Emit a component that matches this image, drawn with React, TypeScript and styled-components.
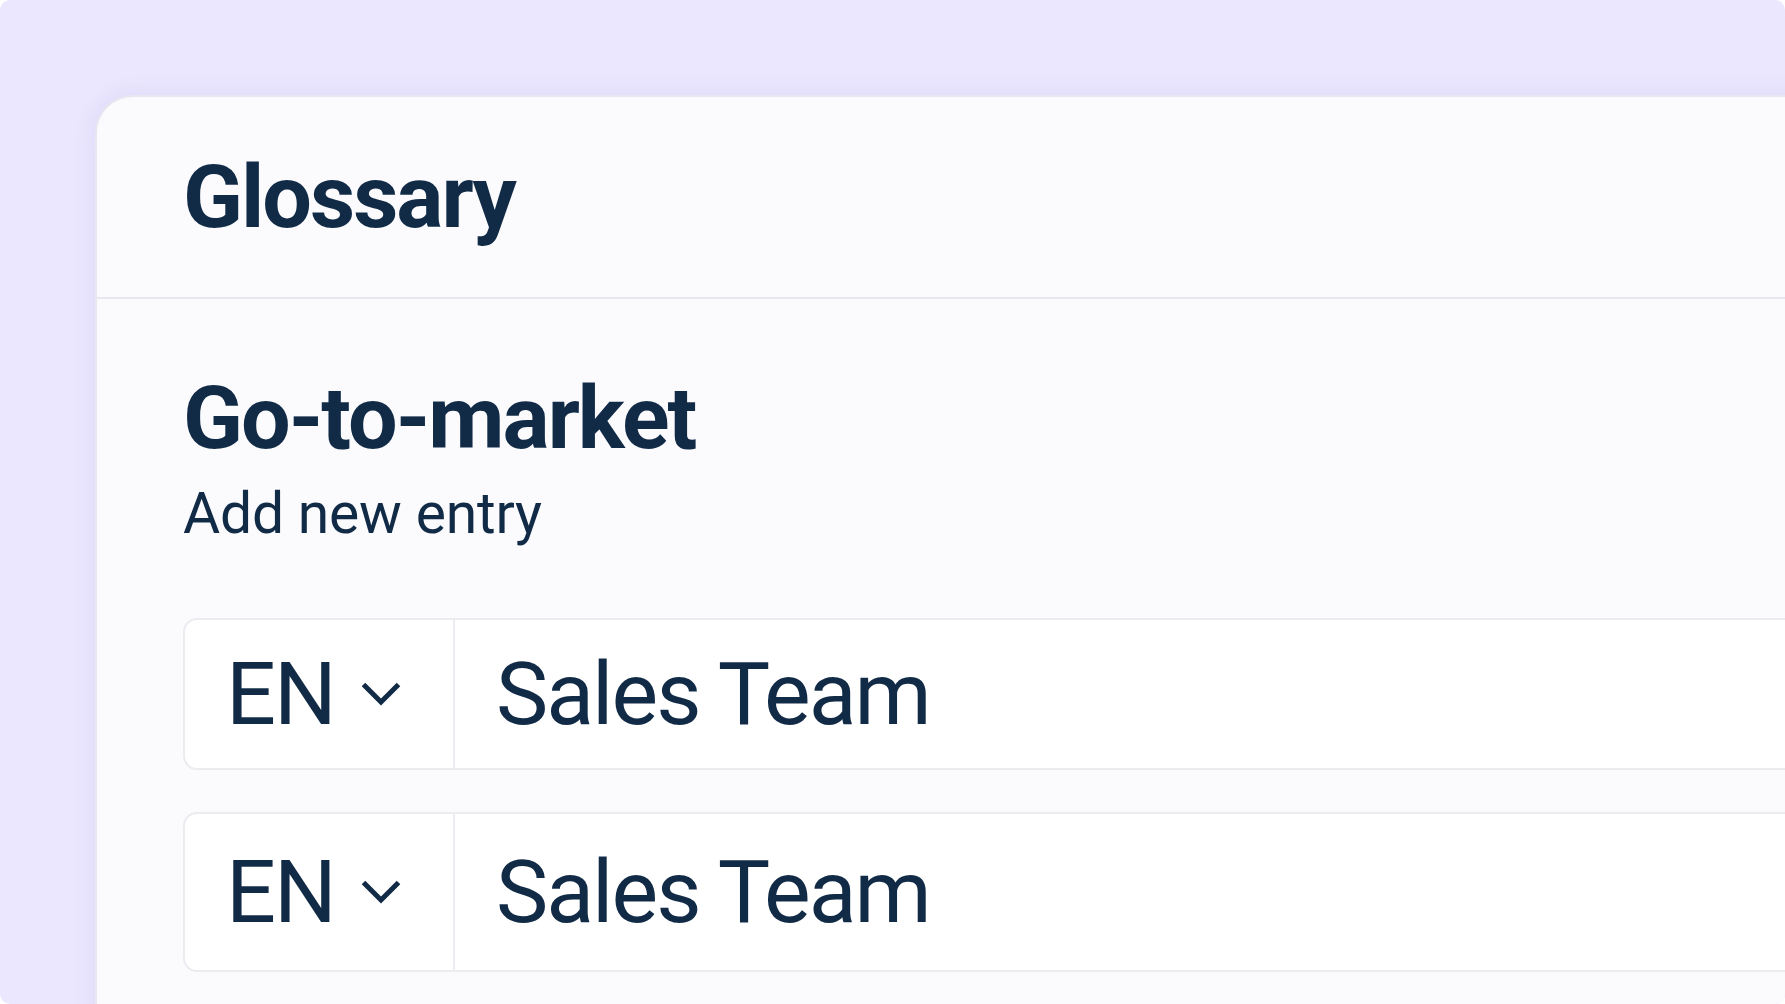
import React from "react";
import styled, { createGlobalStyle } from "styled-components";

const GlobalStyle = createGlobalStyle`
  html, body {
    margin: 0;
    padding: 0;
    background: #ffffff;
    overflow: hidden;
  }
  * { box-sizing: border-box; }
  #root { width: 100vw; height: 100vh; }
`;

const Frame = styled.div`
  width: 100vw;
  height: 100vh;
  background: #ebe7fe;
  border-radius: 10px;
  overflow: hidden;
  padding: 95px 0 0 95px;
  font-family: Roboto, "Liberation Sans", sans-serif;
  color: #112a46;
`;

const Card = styled.section`
  width: calc(100% + 120px);
  min-height: 1100px;
  background: #fbfbfe;
  border: 2px solid #e7e7ef;
  border-radius: 38px 38px 0 0;
  box-shadow: 0 0 22px rgba(110, 90, 200, 0.12);
`;

const Header = styled.header`
  padding: 56px 86px 56px;
  border-bottom: 2px solid #e8e9f0;
`;

const Title = styled.h1`
  margin: 0;
  font-size: 88px;
  line-height: 88px;
  font-weight: 700;
  letter-spacing: -2px;
`;

const Body = styled.div`
  padding: 75px 86px 0;
  display: flex;
  flex-direction: column;
`;

const SectionTitle = styled.h2`
  margin: 0;
  font-size: 88px;
  line-height: 88px;
  font-weight: 700;
  letter-spacing: -2px;
`;

const Subtitle = styled.p`
  margin: 23px 0 0;
  font-size: 57px;
  line-height: 57px;
  font-weight: 400;
  letter-spacing: -0.2px;
`;

const Entries = styled.div`
  margin-top: 76px;
  display: flex;
  flex-direction: column;
  gap: 42px;
`;

const EntryRow = styled.div<{ $height: number }>`
  display: flex;
  align-items: stretch;
  height: ${(p) => p.$height}px;
  background: #ffffff;
  border: 2px solid #ebebf0;
  border-radius: 14px;
`;

const LangSelect = styled.div`
  width: 270px;
  flex: none;
  display: flex;
  align-items: center;
  gap: 26px;
  padding-left: 41px;
  border-right: 2px solid #ececf1;
  font-size: 88px;
  line-height: 88px;
  font-weight: 400;
  letter-spacing: -2px;
`;

const Chevron = styled.svg`
  width: 40px;
  height: 26px;
  flex: none;
`;

const TermText = styled.div`
  display: flex;
  align-items: center;
  padding-left: 41px;
  font-size: 88px;
  line-height: 88px;
  font-weight: 400;
  letter-spacing: -2px;
`;

const ChevronDown = () => (
  <Chevron viewBox="0 0 40 26" fill="none">
    <path
      d="M2.5 3.5 L20 21 L37.5 3.5"
      stroke="#112a46"
      strokeWidth="5"
      strokeLinejoin="miter"
    />
  </Chevron>
);

const entries = [
  { lang: "EN", term: "Sales Team", height: 152 },
  { lang: "EN", term: "Sales Team", height: 160 },
];

export default function App() {
  return (
    <>
      <GlobalStyle />
      <Frame>
        <Card>
          <Header>
            <Title>Glossary</Title>
          </Header>
          <Body>
            <SectionTitle>Go-to-market</SectionTitle>
            <Subtitle>Add new entry</Subtitle>
            <Entries>
              {entries.map((e, i) => (
                <EntryRow key={i} $height={e.height}>
                  <LangSelect>
                    <span>{e.lang}</span>
                    <ChevronDown />
                  </LangSelect>
                  <TermText>{e.term}</TermText>
                </EntryRow>
              ))}
            </Entries>
          </Body>
        </Card>
      </Frame>
    </>
  );
}
